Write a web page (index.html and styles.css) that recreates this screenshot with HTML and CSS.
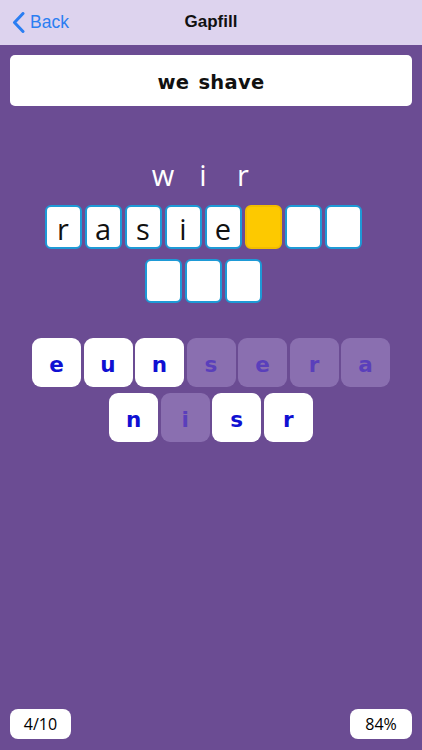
FILE: index.html
```html
<!DOCTYPE html>
<html lang="de">
<head>
<meta charset="utf-8">
<title>Gapfill</title>
<link rel="stylesheet" href="styles.css">
</head>
<body>
<div class="app">
  <header class="nav">
    <a class="back" href="#">
      <svg class="chev" width="13" height="21" viewBox="0 0 13 21"><path d="M11 1.5 L2.5 10.5 L11 19.5" fill="none" stroke="#2b7ef2" stroke-width="3" stroke-linecap="round" stroke-linejoin="round"/></svg>
      <span>Back</span>
    </a>
    <h1 class="title">Gapfill</h1>
    <span class="spacer"></span>
  </header>

  <main class="content">
    <div class="prompt">we shave</div>

    <div class="puzzle">
      <div class="row">
        <span class="cell plain">w</span>
        <span class="cell plain">i</span>
        <span class="cell plain">r</span>
      </div>
      <div class="row">
        <span class="cell box">r</span>
        <span class="cell box">a</span>
        <span class="cell box">s</span>
        <span class="cell box">i</span>
        <span class="cell box">e</span>
        <span class="cell box active"></span>
        <span class="cell box"></span>
        <span class="cell box"></span>
      </div>
      <div class="row">
        <span class="cell box"></span>
        <span class="cell box"></span>
        <span class="cell box"></span>
      </div>
    </div>

    <div class="bank">
      <div class="bank-row">
        <span class="key">e</span>
        <span class="key">u</span>
        <span class="key">n</span>
        <span class="key used">s</span>
        <span class="key used">e</span>
        <span class="key used">r</span>
        <span class="key used">a</span>
      </div>
      <div class="bank-row">
        <span class="key">n</span>
        <span class="key used">i</span>
        <span class="key">s</span>
        <span class="key">r</span>
      </div>
    </div>
  </main>

  <footer class="footer">
    <span class="pill">4/10</span>
    <span class="pill">84%</span>
  </footer>
</div>
</body>
</html>
```

FILE: styles.css
```css
html, body {
  margin: 0;
  padding: 0;
}
body {
  background: #6b4c93;
  font-family: "Liberation Sans", Arial, sans-serif;
}
.app {
  width: 422px;
  height: 750px;
  display: flex;
  flex-direction: column;
  overflow: hidden;
}
.nav {
  height: 45px;
  background: #ddd3ee;
  display: grid;
  grid-template-columns: 1fr auto 1fr;
  align-items: center;
  flex: none;
}
.back {
  display: flex;
  align-items: center;
  gap: 5px;
  padding-left: 12px;
  color: #2b7ef2;
  text-decoration: none;
  font-size: 17.5px;
  margin-top: -1px;
}
.chev {
  display: block;
}
.title {
  margin: 0;
  font-size: 17px;
  font-weight: bold;
  color: #111;
  margin-top: -1px;
}
.content {
  padding: 10px 10px 0;
  display: flex;
  flex-direction: column;
  align-items: center;
}
.prompt {
  align-self: stretch;
  box-sizing: border-box;
  height: 51px;
  padding-top: 4px;
  background: #fff;
  border-radius: 5px;
  display: flex;
  align-items: center;
  justify-content: center;
  font-family: "DejaVu Sans", sans-serif;
  font-weight: bold;
  font-size: 19.5px;
  letter-spacing: 0.3px;
  word-spacing: 2px;
  color: #111;
}
.puzzle {
  margin-top: 45px;
  display: flex;
  flex-direction: column;
  gap: 10px;
  padding-right: 16px;
}
.row {
  display: flex;
  justify-content: center;
  gap: 3px;
}
.cell {
  box-sizing: border-box;
  width: 37px;
  height: 44px;
  display: flex;
  align-items: center;
  justify-content: center;
  padding-top: 5px;
  font-family: "Open Sans", sans-serif;
  font-size: 29px;
  line-height: 1;
}
.plain {
  color: #fff;
  padding-top: 2px;
}
.box {
  background: #fff;
  border: 2.5px solid #1e9ad6;
  border-radius: 6px;
  color: #111;
  padding-top: 2px;
}
.box.active {
  background: #fdc900;
  border-color: #f2bd00;
}
.bank {
  margin-top: 35px;
  display: flex;
  flex-direction: column;
  gap: 6px;
}
.bank-row {
  display: flex;
  justify-content: center;
  gap: 2.5px;
}
.key {
  box-sizing: border-box;
  width: 49px;
  height: 49px;
  border-radius: 9px;
  background: #fff;
  color: #1010d2;
  display: flex;
  align-items: center;
  justify-content: center;
  padding-top: 4px;
  font-family: "DejaVu Sans", sans-serif;
  font-weight: bold;
  font-size: 21.5px;
  line-height: 1;
}
.key.used {
  background: #8a6fb0;
  color: #5a3fbb;
}
.footer {
  margin-top: auto;
  padding: 0 10px 11px;
  display: flex;
  justify-content: space-between;
}
.pill {
  height: 30px;
  min-width: 61px;
  box-sizing: border-box;
  padding: 0 12px;
  background: #fff;
  border-radius: 8px;
  display: flex;
  align-items: center;
  justify-content: center;
  font-family: "Open Sans", sans-serif;
  font-size: 16px;
  font-weight: 500;
  color: #000;
}
.pill:last-child {
  min-width: 62px;
}
```
